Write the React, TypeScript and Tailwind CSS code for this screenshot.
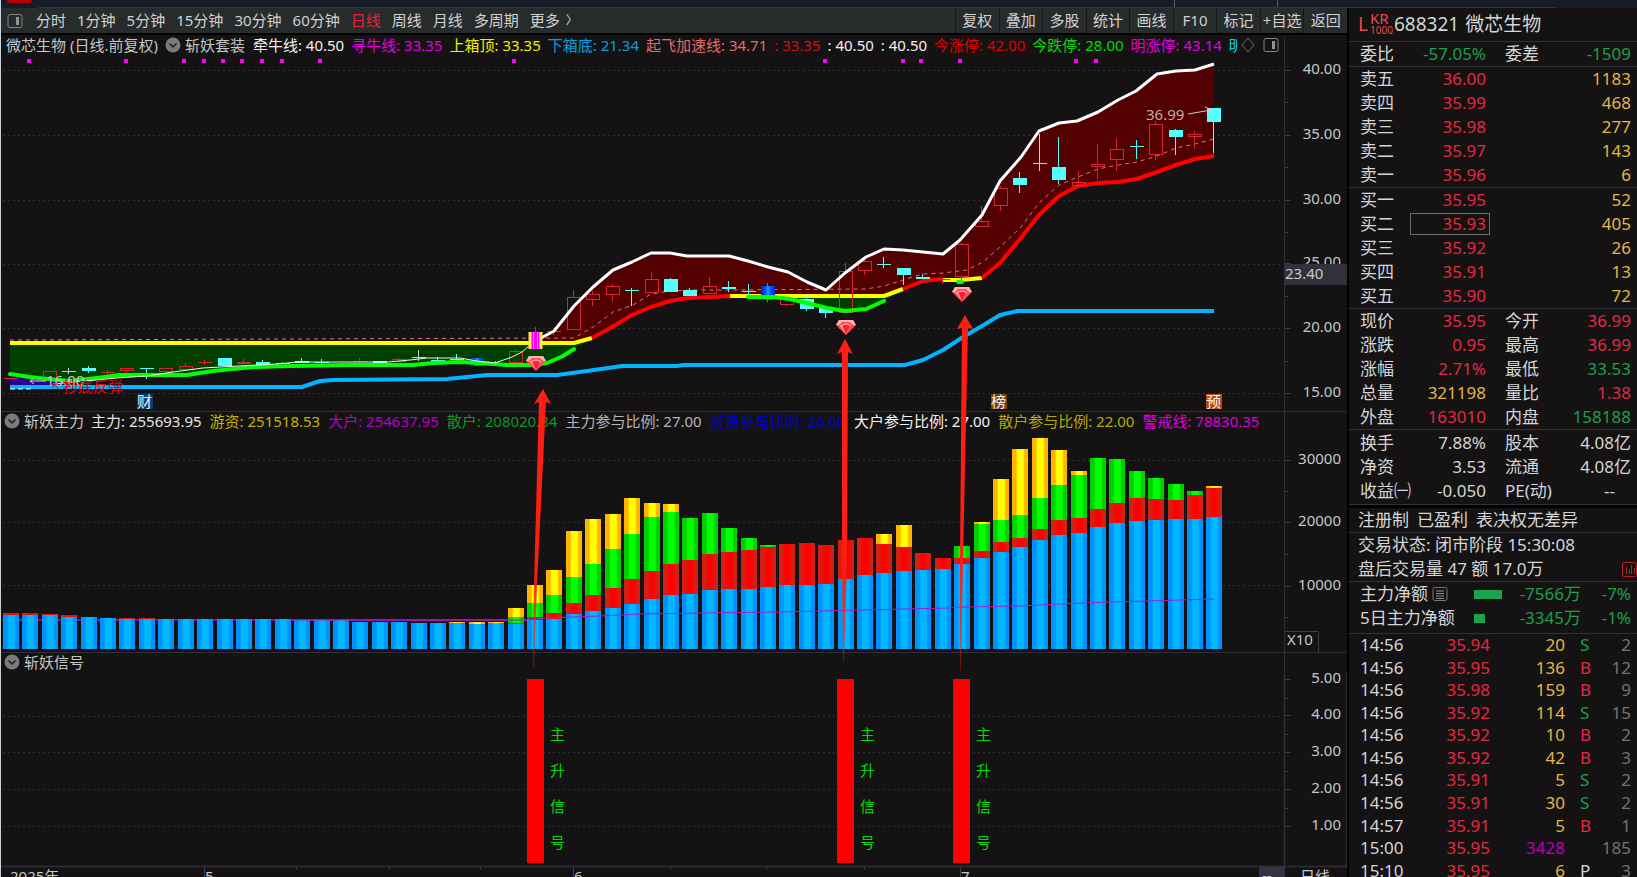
import { Fragment } from "react";
import type { ReactNode } from "react";

type Tone = "red" | "green" | "gold" | "plain" | "purple" | "dim";

const TONES: Record<Tone, string> = {
    red: "text-[#e42844]",
    green: "text-[#1ca04a]",
    gold: "text-[#e2b744]",
    plain: "text-[#d4d6d8]",
    purple: "text-[#bc00bc]",
    dim: "text-[#747474]",
};

const PERIODS = ["分时", "1分钟", "5分钟", "15分钟", "30分钟", "60分钟", "日线", "周线", "月线", "多周期"];
const TOOLS = ["复权", "叠加", "多股", "统计", "画线", "F10", "标记", "+自选", "返回"];

const MAIN_LEGEND = [
    { text: "牵牛线: 40.50", color: "text-[#f2f2f2]" },
    { text: "寻牛线: 33.35", color: "text-[#e000e0]" },
    { text: "上箱顶: 33.35", color: "text-[#f0f000]" },
    { text: "下箱底: 21.34", color: "text-[#00a2e0]" },
    { text: "起飞加速线: 34.71", color: "text-[#e46c6c]" },
    { text: ": 33.35", color: "text-[#d41010]" },
    { text: ": 40.50", color: "text-[#f2f2f2]" },
    { text: ": 40.50", color: "text-[#f2f2f2]" },
    { text: "今涨停: 42.00", color: "text-[#e00000]" },
    { text: "今跌停: 28.00", color: "text-[#00dc00]" },
    { text: "明涨停: 43.14", color: "text-[#e000e0]" },
];

const FORCE_LEGEND = [
    { text: "主力: 255693.95", color: "text-[#e4e4e4]" },
    { text: "游资: 251518.53", color: "text-[#c4b400]" },
    { text: "大户: 254637.95", color: "text-[#b400c8]" },
    { text: "散户: 208020.84", color: "text-[#0c9a24]" },
    { text: "主力参与比例: 27.00", color: "text-[#b4b4b4]" },
    { text: "游资参与比例: 26.00", color: "text-[#0000dc]" },
    { text: "大户参与比例: 27.00", color: "text-[#f2f2f2]" },
    { text: "散户参与比例: 22.00", color: "text-[#b8aa00]" },
    { text: "警戒线: 78830.35", color: "text-[#dc00dc]" },
];

const SELLS = [["卖五", "36.00", "1183"], ["卖四", "35.99", "468"], ["卖三", "35.98", "277"], ["卖二", "35.97", "143"], ["卖一", "35.96", "6"]];
const BUYS = [["买一", "35.95", "52"], ["买二", "35.93", "405"], ["买三", "35.92", "26"], ["买四", "35.91", "13"], ["买五", "35.90", "72"]];

type StatRow = [string, string, Tone, string, string, Tone];

const QUOTES: StatRow[] = [
    ["现价", "35.95", "red", "今开", "36.99", "red"],
    ["涨跌", "0.95", "red", "最高", "36.99", "red"],
    ["涨幅", "2.71%", "red", "最低", "33.53", "green"],
    ["总量", "321198", "gold", "量比", "1.38", "red"],
    ["外盘", "163010", "red", "内盘", "158188", "green"],
];
const BASICS: StatRow[] = [
    ["换手", "7.88%", "plain", "股本", "4.08亿", "plain"],
    ["净资", "3.53", "plain", "流通", "4.08亿", "plain"],
    ["收益㈠", "-0.050", "plain", "PE(动)", "--", "plain"],
];

const TRADES: [string, string, string, string, string][] = [
    ["14:56", "35.94", "20", "S", "2"],
    ["14:56", "35.95", "136", "B", "12"],
    ["14:56", "35.98", "159", "B", "9"],
    ["14:56", "35.92", "114", "S", "15"],
    ["14:56", "35.92", "10", "B", "2"],
    ["14:56", "35.92", "42", "B", "3"],
    ["14:56", "35.91", "5", "S", "2"],
    ["14:56", "35.91", "30", "S", "2"],
    ["14:57", "35.91", "5", "B", "1"],
    ["15:00", "35.95", "3428", "", "185"],
    ["15:10", "35.95", "6", "P", "3"],
];

const barX = (i: number) => Math.round(11 + i * 19.41);

// [index, kind, body top, body bottom, high, low]; r = rising, c = falling, w = flat
const CANDLES: [number, "r" | "c" | "w", number, number, number, number][] = [
    [0, "r", 378, 378, 378, 378], [2, "r", 371, 380, 371, 380], [3, "w", 371, 371, 368, 374],
    [4, "c", 368, 371, 366, 373], [5, "r", 372, 372, 370, 375], [6, "r", 368, 371, 368, 373],
    [7, "c", 368, 368, 368, 379], [8, "r", 368, 372, 368, 372], [9, "r", 366, 370, 363, 370],
    [10, "r", 362, 362, 360, 365], [11, "c", 358, 366, 358, 366], [12, "r", 362, 364, 359, 364],
    [13, "c", 362, 365, 360, 365], [14, "c", 363, 363, 362, 364], [15, "c", 361, 362, 358, 362],
    [16, "c", 362, 362, 359, 364], [18, "r", 361, 361, 358, 361], [19, "c", 361, 362, 361, 362],
    [20, "r", 359, 362, 358, 362], [21, "w", 357, 357, 350, 361], [22, "c", 360, 360, 357, 362],
    [23, "c", 359, 359, 354, 361], [25, "c", 364, 364, 361, 366], [26, "r", 351, 363, 349, 363],
    [28, "r", 331, 331, 330, 335], [29, "r", 297, 330, 290, 330], [30, "r", 294, 300, 291, 306],
    [31, "r", 286, 295, 284, 302], [32, "c", 290, 290, 288, 306], [33, "r", 279, 293, 272, 293],
    [34, "c", 279, 292, 278, 292], [35, "c", 290, 296, 288, 296], [36, "r", 286, 294, 277, 294],
    [37, "c", 287, 289, 281, 292], [38, "c", 291, 291, 284, 296], [40, "r", 299, 305, 299, 306],
    [41, "c", 299, 309, 296, 311], [42, "c", 307, 313, 307, 318], [43, "r", 271, 313, 263, 313],
    [44, "r", 261, 271, 259, 275], [45, "c", 264, 264, 257, 268], [46, "c", 268, 275, 268, 285],
    [47, "c", 277, 279, 274, 279], [48, "r", 279, 279, 279, 284], [49, "r", 244, 277, 243, 280],
    [50, "r", 221, 227, 206, 227], [51, "r", 188, 206, 186, 211], [52, "c", 178, 185, 172, 193],
    [53, "c", 163, 163, 134, 171], [54, "c", 167, 180, 137, 184], [55, "r", 182, 186, 171, 187],
    [56, "r", 164, 167, 144, 179], [57, "r", 149, 160, 138, 171], [58, "c", 146, 146, 140, 159],
    [59, "r", 124, 155, 121, 160], [60, "c", 130, 137, 129, 155], [61, "r", 134, 137, 131, 149],
    [62, "c", 108, 122, 108, 153],
];

const UPPER =
    "541,338 554,331 574,306 593,287 613,270 632,262 651,253 670,253 687,256 729,256 748,261 768,267 788,272 807,282 826,290 845,273 866,257 884,249 903,250 923,252 943,254 960,240 982,215 1000,181 1021,157 1039,131 1059,123 1077,121 1098,112 1118,100 1136,91 1157,74 1176,71 1195,70 1214,64";
const LOWER_BACK =
    "1214,156 1195,159 1176,165 1157,172 1137,179 1118,182 1098,183 1078,186 1059,196 1039,215 1020,239 1000,263 982,278 960,280 943,279 923,281 903,289 884,296 730,296 688,298 670,301 651,307 632,315 612,327 592,338 574,343 541,343";
const RED_LINES = [
    "592,338 612,327 632,315 651,307 670,301 688,298 730,296",
    "903,289 923,281 943,279",
    "982,278 1000,263 1020,239 1039,215 1059,196 1078,186 1098,183 1118,182 1137,179 1157,172 1176,165 1195,159 1214,156",
];
const YELLOW_LINES = ["10,343 574,343 592,338", "730,296 884,296 903,289", "943,280 960,280 982,278"];
const GREEN_LEFT =
    "10,374 30,377 47,379 70,381 97,378 120,375 187,375 213,371 233,369 253,367 293,366 350,365 413,365 433,363 460,362 480,363 507,365 533,365 547,363 554,360 563,356 574,349";
const GREEN_RIGHT = "748,297 773,297 790,299 807,303 827,308 845,311 866,309 884,301";
const BLUE_LINE =
    "10,387 302,387 320,381 333,380 447,379 467,377 487,375 557,375 587,371 622,366 677,366 683,365 905,365 923,360 943,350 963,337 982,326 1000,315 1018,311 1214,311";
const THIN_WHITE =
    "53,384 117,378 147,376 173,372 203,368 238,366 277,364 297,362 350,362 388,362 410,360 427,358 460,358 477,361 495,363 512,357 522,352 530,345 541,338";
const DASHED =
    "10,340 574,338 593,327 613,312 633,305 651,294 670,291 693,290 730,290 866,289 884,286 903,280 923,274 943,273 967,270 983,262 1000,247 1021,227 1039,203 1059,185 1078,177 1098,169 1118,165 1137,162 1157,156 1176,148 1195,144 1214,139";

const SIGNAL_DOTS = [29, 126, 184, 204, 223, 242, 262, 282, 320, 514, 825, 903, 921, 960, 1076, 1096];

// top edges of the blue, red, green and yellow layers; 0 = layer missing
const STACKS: [number, number, number, number][] = [
    [615, 613, 0, 0], [615, 613, 0, 0], [615, 614, 0, 0], [617, 615, 0, 0], [617, 0, 0, 0], [618, 0, 0, 0],
    [619, 618, 0, 0], [619, 618, 0, 0], [619, 0, 0, 0], [619, 0, 0, 0], [619, 0, 0, 0], [619, 0, 0, 0],
    [619, 0, 0, 0], [619, 0, 0, 0], [619, 0, 0, 0], [620, 0, 0, 0], [620, 0, 0, 0], [620, 0, 0, 0],
    [622, 0, 0, 0], [622, 0, 0, 0], [622, 0, 0, 0], [623, 0, 0, 0], [623, 0, 0, 0], [623, 0, 0, 622],
    [624, 0, 0, 622], [624, 0, 623, 622], [624, 623, 617, 608], [620, 617, 603, 585], [619, 613, 595, 570],
    [614, 603, 577, 531], [611, 595, 564, 519], [608, 588, 549, 514], [604, 579, 534, 498], [599, 571, 517, 503],
    [595, 564, 512, 504], [594, 560, 518, 0], [590, 554, 513, 0], [589, 552, 528, 0], [589, 550, 538, 0],
    [587, 547, 545, 0], [585, 544, 0, 0], [585, 543, 0, 0], [584, 545, 0, 0], [579, 540, 0, 0], [575, 538, 0, 0],
    [573, 544, 0, 534], [571, 547, 0, 525], [570, 553, 0, 0], [569, 558, 0, 0], [564, 558, 546, 0],
    [558, 551, 524, 522], [552, 542, 520, 479], [547, 538, 515, 449], [540, 529, 498, 438], [535, 520, 485, 450],
    [533, 518, 475, 471], [527, 509, 458, 0], [523, 503, 459, 0], [521, 498, 471, 0], [520, 499, 478, 0],
    [519, 500, 484, 0], [519, 495, 491, 0], [517, 488, 0, 486],
];
const LAYERS = ["url(#blueBar)", "url(#redBar)", "url(#greenBar)", "url(#yellowBar)"];

function GridLine({ y }: { y: number }) {
    return <line x1="3" x2="1282" y1={y + 0.5} y2={y + 0.5} stroke="#303032" strokeDasharray="2 3" />;
}

function AxisLabel({ y, children }: { y: number; children: ReactNode }) {
    return (
        <>
            <line x1="1285" x2="1291" y1={y + 0.5} y2={y + 0.5} stroke="#3a3d44" />
            <text x="1341" y={y + 4} textAnchor="end" fill="#c4c8ca">{children}</text>
        </>
    );
}

function AxisTicks({ ys }: { ys: number[] }) {
    return <>{ys.map((y) => <line key={y} x1="1285" x2="1288" y1={y + 0.5} y2={y + 0.5} stroke="#3a3d44" />)}</>;
}

function Gem({ x, y }: { x: number; y: number }) {
    return (
        <g transform={`translate(${x} ${y})`}>
            <path d="M3 0h14l3 5-10 10L0 5z" fill="#ff4d58" />
            <path d="M3 0h14l3 5h-3l-3-3H6L3 5H0z" fill="#ffb3b3" />
            <path d="M6 5l4-2 4 2-4 9z" fill="#ff1f3a" />
            <path d="M3 5h3l4 9z" fill="#ff8a8a" />
            <path d="M5 6q5-4 10 0" fill="none" stroke="#ffd9d9" />
        </g>
    );
}

function Badge({ x, fill, children }: { x: number; fill: string; children: ReactNode }) {
    return (
        <g>
            <rect x={x} y="394" width="16" height="15" fill={fill} />
            <text x={x} y="407" fill="#f4f4f4">{children}</text>
        </g>
    );
}

function Candle({ c }: { c: (typeof CANDLES)[number] }) {
    const [i, kind, top, bottom, high, low] = c;
    const x = barX(i);
    const color = kind === "r" ? "#d8233c" : kind === "c" ? "#54ffff" : "#c8d0c8";
    return (
        <g stroke={color}>
            {high < top && <line x1={x - 0.5} x2={x - 0.5} y1={high} y2={top} />}
            {low > bottom && <line x1={x - 0.5} x2={x - 0.5} y1={bottom} y2={low} />}
            {top === bottom ? (
                <line x1={x - 7} x2={x + 7} y1={top + 0.5} y2={top + 0.5} />
            ) : (
                <rect x={x - 6.5} y={top + 0.5} width="13" height={bottom - top - 1 || 1} fill={kind === "c" ? color : "none"} />
            )}
        </g>
    );
}

function PriceChart() {
    return (
        <svg viewBox="1 56 1346 355" className="block w-full text-[15px]">
            <defs>
                <linearGradient id="blueCandle">
                    <stop offset="0" stopColor="#0022e0" />
                    <stop offset=".3" stopColor="#0050f0" />
                    <stop offset=".5" stopColor="#12a0ff" />
                    <stop offset=".7" stopColor="#0050f0" />
                    <stop offset="1" stopColor="#0022e0" />
                </linearGradient>
            </defs>
            {[70, 135, 200, 264, 328, 393].map((y) => <GridLine key={y} y={y} />)}
            {SIGNAL_DOTS.map((x) => <rect key={x} x={x - 2} y="59" width="4" height="4" fill="#ff00ff" />)}

            <polygon points={`${UPPER} ${LOWER_BACK}`} fill="#520000" />
            <polygon points={`${GREEN_LEFT} 592,338 574,343 10,343`} fill="#003f00" />
            <polygon points={`${GREEN_RIGHT} 903,289 884,296 748,296`} fill="#003f00" />
            <polygon points="10,374 47,379 70,381 97,379 112,379 55,385 50,387 10,387" fill="#2c0090" />

            <polyline points={DASHED} fill="none" stroke="#d87878" strokeDasharray="4 4" />
            <g fill="none" strokeWidth="4" strokeLinejoin="round">
                <polyline points={BLUE_LINE} stroke="#00b4ff" />
                {YELLOW_LINES.map((p) => <polyline key={p} points={p} stroke="#ffff00" />)}
                {RED_LINES.map((p) => <polyline key={p} points={p} stroke="#ff0000" />)}
            </g>
            {CANDLES.map((c) => <Candle key={c[0]} c={c} />)}
            <rect x="470" y="358" width="14" height="8" fill="url(#blueCandle)" />
            <path d="M767.500 283v19" stroke="#2c8cff" />
            <rect x="761" y="286" width="14" height="14" fill="url(#blueCandle)" />
            <g fill="none" strokeWidth="4" strokeLinejoin="round" strokeLinecap="round" stroke="#00ff00">
                <polyline points={GREEN_LEFT} />
                <polyline points={GREEN_RIGHT} />
                <polyline points="958,282 962,282" />
            </g>
            <polyline points={THIN_WHITE} fill="none" stroke="#f0f0f0" />
            <polyline points={UPPER} fill="none" stroke="#ffffff" strokeWidth="3" strokeLinejoin="round" />
            <line x1="10" x2="32" y1="389" y2="389" stroke="#ffffff" strokeDasharray="5 3" />

            <path d="M535.500 327v8" stroke="#d8233c" />
            <rect x="529" y="332" width="13" height="17" fill="#ff00ff" />
            <path d="M530 332v17M541 332v17" stroke="#ffe860" strokeWidth="3" />
            <path d="M533.500 332v17M537.500 332v17" stroke="#ff8ad8" />

            <Gem x={526} y={356} />
            <Gem x={836} y={320} />
            <Gem x={952} y={287} />

            <text x="46" y="386" fill="#c4c4c4">16.00</text>
            <path d="M46 381H30M34 378l-4 3 4 3" fill="none" stroke="#d8d8d8" />
            <text x="63" y="392" fill="#f00000">抄底反弹</text>
            <path d="M60 390l-7-6M53 388v-4h5" fill="none" stroke="#f00000" />
            <text x="1146" y="120" fill="#c4acac">36.99</text>
            <path d="M1188 114l23-4M1205 107l6 3-4 4" fill="none" stroke="#d8c8c8" />

            <Badge x={137} fill="#0b3c70">财</Badge>
            <Badge x={991} fill="#7c3f08">榜</Badge>
            <Badge x={1206} fill="#b5460f">预</Badge>

            <line x1="1284.500" x2="1284.500" y1="56" y2="411" stroke="#2d3038" />
            <AxisLabel y={70}>40.00</AxisLabel>
            <AxisLabel y={135}>35.00</AxisLabel>
            <AxisLabel y={200}>30.00</AxisLabel>
            <AxisLabel y={263}>25.00</AxisLabel>
            <AxisLabel y={328}>20.00</AxisLabel>
            <AxisLabel y={393}>15.00</AxisLabel>
            <AxisTicks ys={[102, 167, 232, 296, 361]} />
            <rect x="1284" y="264" width="63" height="21" fill="#32313b" />
            <text x="1285" y="279" fill="#c8cacc">23.40</text>
        </svg>
    );
}

function BarGradient({ id, edge, mid }: { id: string; edge: string; mid: string }) {
    return (
        <linearGradient id={id}>
            <stop offset="0" stopColor={edge} />
            <stop offset=".25" stopColor={edge} />
            <stop offset=".35" stopColor={mid} />
            <stop offset=".7" stopColor={mid} />
            <stop offset=".8" stopColor={edge} />
            <stop offset="1" stopColor={edge} />
        </linearGradient>
    );
}

function ForceChart() {
    return (
        <svg viewBox="1 432 1346 220" className="block w-full text-[15px]">
            <defs>
                <BarGradient id="blueBar" edge="#0093ff" mid="#00b8ff" />
                <BarGradient id="redBar" edge="#d42014" mid="#ff0000" />
                <BarGradient id="greenBar" edge="#00d000" mid="#00ff00" />
                <BarGradient id="yellowBar" edge="#ffb400" mid="#ffff00" />
            </defs>
            {[460, 522, 585].map((y) => <GridLine key={y} y={y} />)}
            <line x1="3" x2="530" y1="620" y2="620" stroke="#a000a0" strokeWidth="2" />
            {STACKS.map((tops, i) => {
                let base = 649;
                return (
                    <Fragment key={i}>
                        {tops.map((top, k) => {
                            if (!top) return null;
                            const height = base - top;
                            base = top;
                            return <rect key={k} x={barX(i) - 8} y={top} width="16" height={height} fill={LAYERS[k]} />;
                        })}
                    </Fragment>
                );
            })}
            <polyline
                points="290,620 520,620 545,618 600,616 640,614 700,613 780,612 860,610 950,608 960,607 1020,606 1060,604 1110,602 1180,600 1214,599"
                fill="none"
                stroke="#a020d0"
            />
            <line x1="1284.500" x2="1284.500" y1="432" y2="652" stroke="#2d3038" />
            <AxisLabel y={460}>30000</AxisLabel>
            <AxisLabel y={522}>20000</AxisLabel>
            <AxisLabel y={586}>10000</AxisLabel>
            <AxisTicks ys={[491, 554, 617]} />
            <path d="M1285 631.500h33.500V652" fill="none" stroke="#3a3d44" />
            <text x="1287" y="645" fill="#c4c8ca">X10</text>
        </svg>
    );
}

function SignalChart() {
    return (
        <svg viewBox="1 673 1346 204" className="block w-full text-[15px]">
            {[716, 752, 789, 826].map((y) => <GridLine key={y} y={y} />)}
            {[527, 837, 953].map((x) => (
                <g key={x}>
                    <rect x={x} y="679" width="17" height="184" fill="#ff0000" />
                    {["主", "升", "信", "号"].map((ch, k) => (
                        <text key={ch} x={x + 23} y={740 + k * 36} fill="#00dc00">{ch}</text>
                    ))}
                </g>
            ))}
            <path d="M1 866.500h1346M1284.500 673v204M1346.500 673v193" stroke="#2d3038" strokeWidth="1.500" />
            <AxisLabel y={679}>5.00</AxisLabel>
            <AxisLabel y={715}>4.00</AxisLabel>
            <AxisLabel y={752}>3.00</AxisLabel>
            <AxisLabel y={789}>2.00</AxisLabel>
            <AxisLabel y={826}>1.00</AxisLabel>
            <AxisTicks ys={[698, 734, 771, 808]} />

            <path d="M204.500 867v10M573.500 867v10M960.500 867v10M296.500 867v3M389.500 867v3M480.500 867v3M670.500 867v3M766.500 867v3M864.500 867v3" stroke="#3a3d44" />
            <rect x="1259" y="867" width="25" height="10" fill="#35343f" />
            <g fill="#c4c8ca">
                <text x="10" y="882">2025年</text>
                <text x="205" y="882">5</text>
                <text x="574" y="882">6</text>
                <text x="961" y="882">7</text>
                <text x="1262" y="881">--</text>
                <text x="1300" y="882">日线</text>
            </g>
        </svg>
    );
}

// long pointers drawn over all three charts
function Pointers() {
    return (
        <svg viewBox="1 56 1346 821" className="pointer-events-none absolute inset-x-0 top-[21px] w-full">
            <defs>
                <linearGradient id="tail" gradientUnits="userSpaceOnUse" x1="0" y1="560" x2="0" y2="672">
                    <stop offset="0" stopColor="#ff1e12" />
                    <stop offset=".7" stopColor="#ff1e12" stopOpacity=".7" />
                    <stop offset="1" stopColor="#ff1e12" stopOpacity=".2" />
                </linearGradient>
            </defs>
            <g fill="url(#tail)">
                <path d="M543 389l8 15-5-2-9 182-3 83h-1l1-83 5-182-5 2z" />
                <path d="M845 339l8 15-5-2-1 208-3 102h-1l-1-102V352l-5 2z" />
                <path d="M965 315l8 14-5-1-5 232-2 111h-1v-111l2-232-5 1z" />
            </g>
        </svg>
    );
}

function ChevronToggle({ label }: { label: string }) {
    return (
        <button aria-label={label} className="shrink-0">
            <svg viewBox="0 0 16 16" className="block size-4">
                <circle cx="8" cy="8" r="7.500" fill="#7b7b7b" />
                <path d="M4.500 6.500L8 10l3.500-3.500" fill="none" stroke="#1c1c1c" strokeWidth="1.500" />
            </svg>
        </button>
    );
}

function PaneIcon() {
    return (
        <svg viewBox="0 0 16 16" className="block size-4 shrink-0">
            <rect x="1" y="1.500" width="14" height="13" rx="2" fill="none" stroke="#858585" />
            <rect x="9" y="4" width="3" height="8" fill="#949494" />
        </svg>
    );
}

function LegendRow({ children }: { children: ReactNode }) {
    return (
        <div className="flex h-5 text-[15px] leading-5">
            <div className="flex min-w-0 flex-1 items-center overflow-hidden border-r border-[#2d3038] pb-0.5 whitespace-nowrap">{children}</div>
            <div className="w-[62px] shrink-0" />
        </div>
    );
}

function Toolbar() {
    return (
        <nav className="flex h-[27px] items-stretch border-b-2 border-black bg-[#282b2c] text-[15px] text-[#d0d2d3]">
            <div className="flex items-center gap-[11px] pl-1.5 whitespace-nowrap">
                <button aria-label="侧栏" className="mr-0.5"><PaneIcon /></button>
                {PERIODS.map((p) => (
                    <button key={p} className={p === "日线" ? "text-[#e0243f]" : ""}>{p}</button>
                ))}
                <button className="flex items-center">更多<span className="ml-1.5 text-xs">〉</span></button>
            </div>
            <div className="ml-auto grid w-[392px] grid-cols-9">
                {TOOLS.map((t) => (
                    <button key={t} className="border-l border-[#151617] text-center whitespace-nowrap">{t}</button>
                ))}
            </div>
        </nav>
    );
}

function BookTable({ rows, selected }: { rows: string[][]; selected?: string }) {
    return (
        <table className="w-full table-fixed border-b border-[#2d323b]">
            <tbody>
                {rows.map(([label, price, volume]) => (
                    <tr key={label} className="h-6">
                        <th scope="row" className="w-[61px] pl-[11px] text-left font-normal">{label}</th>
                        <td className="w-20 text-right text-[#e42844]">
                            <div className={`h-[22px] border pr-[3px] leading-5 ${label === selected ? "border-[#6a6a6a]" : "border-transparent"}`}>{price}</div>
                        </td>
                        <td className="pr-1.5 text-right text-[#e2b744]">{volume}</td>
                    </tr>
                ))}
            </tbody>
        </table>
    );
}

function StatTable({ rows }: { rows: StatRow[] }) {
    return (
        <table className="w-full table-fixed">
            <tbody>
                {rows.map(([a, av, at, b, bv, bt]) => (
                    <tr key={a} className="h-6 whitespace-nowrap">
                        <th scope="row" className="w-[61px] pl-[11px] text-left font-normal">{a}</th>
                        <td className={`w-20 pr-1 text-right ${TONES[at]}`}>{av}</td>
                        <th scope="row" className="w-[70px] pl-[15px] text-left font-normal">{b}</th>
                        <td className={`text-right ${bv === "--" ? "pr-[22px]" : "pr-1.5"} ${TONES[bt]}`}>{bv}</td>
                    </tr>
                ))}
            </tbody>
        </table>
    );
}

function FlowRow({ label, bar, amount, percent }: { label: ReactNode; bar: string; amount: string; percent: string }) {
    return (
        <div className="flex h-6 items-center pr-1.5 pl-[11px] whitespace-nowrap text-[#1ca04a]">
            <div className="flex w-[114px] items-center gap-1 text-[#d4d6d8]">{label}</div>
            <div className={`h-[9px] bg-[#18a44c] ${bar}`} />
            <div className="ml-auto">{amount}</div>
            <div className="w-[50px] text-right">{percent}</div>
        </div>
    );
}

function QuotePanel() {
    return (
        <aside className="w-72 shrink-0 overflow-hidden text-[17px] leading-6 text-[#d4d6d8]">
            <header className="flex h-[34px] items-center border-b border-[#2d323b] pb-0.5 pl-[9px] text-[19px] whitespace-nowrap">
                <span className="w-3 text-[#f04848]">L</span>
                <span className="flex w-6 flex-col text-[#f04848]">
                    <span className="text-[15px] leading-3">KR</span>
                    <span className="text-[10px] leading-3">1000</span>
                </span>
                <span className="mr-1.5">688321</span>
                <span>微芯生物</span>
            </header>
            <div className="border-b border-[#2d323b]">
                <StatTable rows={[["委比", "-57.05%", "green", "委差", "-1509", "green"]]} />
            </div>
            <BookTable rows={SELLS} />
            <BookTable rows={BUYS} selected="买二" />
            <div className="border-b border-[#2d323b]">
                <StatTable rows={QUOTES} />
            </div>
            <div className="border-b border-[#2d323b] py-px">
                <StatTable rows={BASICS} />
            </div>
            <p className="flex gap-2 border-t-3 border-b border-t-black border-b-[#2d323b] pl-[9px]">
                <span>注册制</span>
                <span>已盈利</span>
                <span>表决权无差异</span>
            </p>
            <div className="border-b border-[#2d323b] pl-[9px]">
                <p>交易状态: 闭市阶段 15:30:08</p>
                <div className="flex items-center justify-between">
                    <p>盘后交易量 47 额 17.0万</p>
                    <button aria-label="盘后图表">
                        <svg viewBox="0 0 15 15" className="block size-[15px]">
                            <rect x=".5" y=".5" width="14" height="14" rx="2" fill="none" stroke="#c42020" />
                            <path d="M4.500 5v7M7.500 7v5M9.500 3v9M12.500 6v6" stroke="#c42020" />
                        </svg>
                    </button>
                </div>
            </div>
            <div className="border-b border-[#2d323b] pb-[3px]">
                <FlowRow
                    label={
                        <>
                            主力净额
                            <svg viewBox="0 0 16 16" className="size-4">
                                <rect x="1" y="1.500" width="14" height="13" rx="2" fill="none" stroke="#777777" />
                                <path d="M4 5h8M4 7.500h8M4 10h8M4 12.500h8" stroke="#909090" />
                            </svg>
                        </>
                    }
                    bar="w-7"
                    amount="-7566万"
                    percent="-7%"
                />
                <FlowRow label="5日主力净额" bar="w-[11px]" amount="-3345万" percent="-1%" />
            </div>
            <table className="h-[248px] w-full table-fixed leading-5">
                <tbody>
                    {TRADES.map(([time, price, volume, side, count], i) => (
                        <tr key={i}>
                            <td className="w-20 pl-[11px]">{time}</td>
                            <td className="w-[61px] text-right text-[#e42844]">{price}</td>
                            <td className={`w-[75px] text-right ${volume === "3428" ? TONES.purple : TONES.gold}`}>{volume}</td>
                            <td className={`w-8 pl-[15px] ${side === "S" ? TONES.green : side === "B" ? TONES.red : TONES.plain}`}>{side}</td>
                            <td className={`pr-1.5 text-right ${TONES.dim}`}>{count}</td>
                        </tr>
                    ))}
                </tbody>
            </table>
        </aside>
    );
}

export default function App() {
    return (
        <div className="flex h-screen flex-col overflow-hidden border-l border-[#c9d3dc] bg-[#141213] font-['Noto_Sans','Noto_Sans_CJK_SC',sans-serif]">
            <div className="flex h-2 shrink-0 items-start bg-[#161b25]">
                <div className="ml-1.5 h-[3px] w-[25px] rounded-b-sm bg-[#b80000]" />
                <div className="ml-1.5 flex h-2 flex-1 justify-end border-b border-[#30353d] pr-[279px]">
                    <div className="h-[7px] w-[104px] border-x border-[#5a5f66]" />
                </div>
                <div className="w-20" />
            </div>

            <div className="flex min-h-0 flex-1">
                <main className="min-w-0 flex-1 border-r-2 border-black">
                    <Toolbar />
                    <div className="relative">
                        <section className="pt-px">
                            <LegendRow>
                                <div className="mr-[7px] ml-[5px] text-[#c4c6c7]">微芯生物 (日线.前复权)</div>
                                <ChevronToggle label="指标" />
                                <div className="mr-2 ml-1 text-[#c4c6c7]">斩妖套装</div>
                                <div className="flex gap-[7px]">
                                    {MAIN_LEGEND.map(({ text, color }, i) => (
                                        <span key={i} className={color}>{text}</span>
                                    ))}
                                    <span className="w-2 overflow-hidden text-[#00d8e8]">明</span>
                                </div>
                                <svg viewBox="0 0 14 20" className="ml-1 h-5 w-3.5 shrink-0">
                                    <path d="M7 3l6 7-6 7-6-7z" fill="none" stroke="#6a6a6a" />
                                </svg>
                                <button aria-label="面板" className="ml-2"><PaneIcon /></button>
                            </LegendRow>
                            <PriceChart />
                        </section>

                        <section className="border-t border-[#2d3038]">
                            <LegendRow>
                                <div className="ml-[3px]" />
                                <ChevronToggle label="斩妖主力" />
                                <div className="mr-[7px] ml-1 text-[#c4c6c7]">斩妖主力</div>
                                <div className="flex gap-2">
                                    {FORCE_LEGEND.map(({ text, color }) => (
                                        <span key={text} className={color}>{text}</span>
                                    ))}
                                </div>
                            </LegendRow>
                            <ForceChart />
                        </section>

                        <section className="border-t border-[#2d3038]">
                            <LegendRow>
                                <div className="ml-[3px]" />
                                <ChevronToggle label="斩妖信号" />
                                <div className="ml-1 text-[#c4c6c7]">斩妖信号</div>
                            </LegendRow>
                            <SignalChart />
                        </section>
                        <Pointers />
                    </div>
                </main>
                <QuotePanel />
            </div>
        </div>
    );
}
